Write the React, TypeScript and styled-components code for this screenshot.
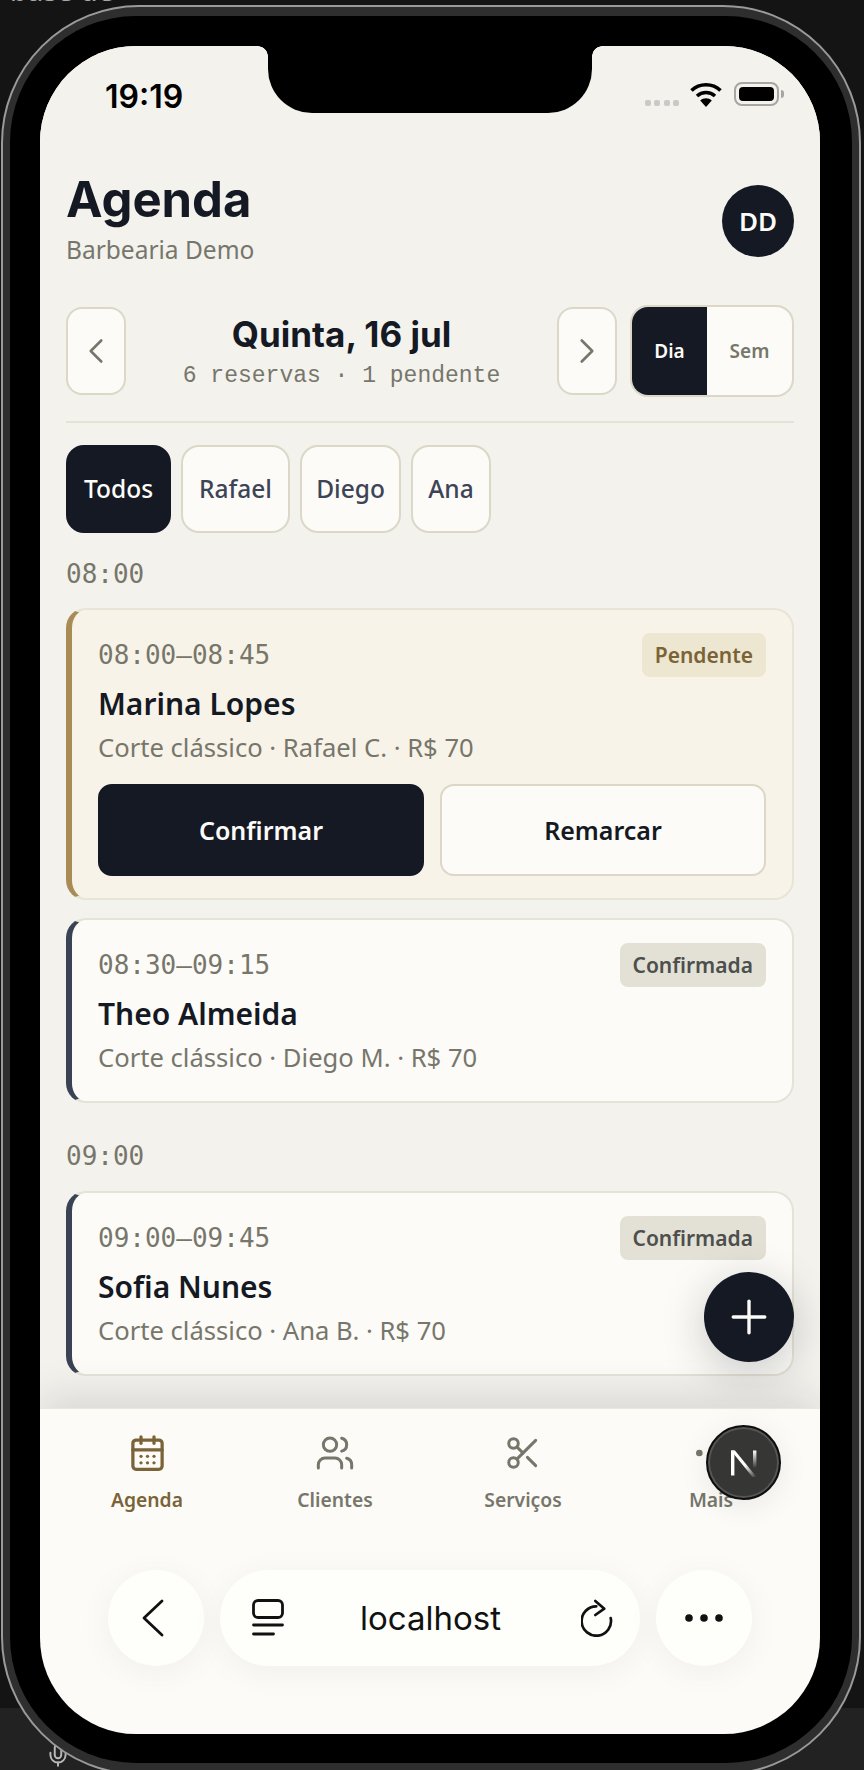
import styled, { createGlobalStyle } from "styled-components";
import { CalendarDays, ChevronLeft, ChevronRight, Ellipsis, Mic, Plus, Scissors, Users } from "lucide-react";

const sans = `"Noto Sans", Roboto, sans-serif`;
const display = `Inter, "Noto Sans", sans-serif`;
const mono = `"DejaVu Sans Mono", "Liberation Mono", monospace`;

const GlobalStyle = createGlobalStyle`
    html, body {
        margin: 0;
        padding: 0;
        background: #141414;
    }
    * {
        box-sizing: border-box;
    }
`;

type Booking = { time: string; name: string; detail: string; status: string };

const eight: Booking[] = [
    { time: "08:00–08:45", name: "Marina Lopes", detail: "Corte clássico · Rafael C. · R$ 70", status: "Pendente" },
    { time: "08:30–09:15", name: "Theo Almeida", detail: "Corte clássico · Diego M. · R$ 70", status: "Confirmada" },
];
const nine: Booking[] = [
    { time: "09:00–09:45", name: "Sofia Nunes", detail: "Corte clássico · Ana B. · R$ 70", status: "Confirmada" },
];

const BookingCard = (props: { booking: Booking }): JSX.Element => {
    const pending = props.booking.status === "Pendente";
    return (
        <Card $pending={pending}>
            <CardTop>
                <CardTime>{props.booking.time}</CardTime>
                <Badge $pending={pending}>{props.booking.status}</Badge>
            </CardTop>
            <CardName>{props.booking.name}</CardName>
            <CardDetail>{props.booking.detail}</CardDetail>
            {pending && (
                <Actions>
                    <ActionButton $primary>Confirmar</ActionButton>
                    <ActionButton>Remarcar</ActionButton>
                </Actions>
            )}
        </Card>
    );
};

const App = (): JSX.Element => {
    return (
        <>
            <GlobalStyle />
            <Page>
                <BackText>base de</BackText>
                <BackMic><Mic size={26} strokeWidth={1.8} /></BackMic>
                <Frame>
                    <Bezel>
                        <Screen>
                            <Notch />
                            <StatusBar>
                                <Clock>19:19</Clock>
                                <StatusIcons>
                                    <Signal><i /><i /><i /><i /></Signal>
                                    <svg width="32" height="25" viewBox="0 0 32 25" fill="none" stroke="#000" strokeWidth="3.6">
                                        <path d="M1.5 8.5C9.5 .8 22.5 .8 30.5 8.5" />
                                        <path d="M7 14C12 9.4 20 9.4 25 14" />
                                        <path d="M16 25l-5.8-6.4C13.5 15.6 18.5 15.6 21.8 18.6Z" fill="#000" stroke="none" />
                                    </svg>
                                    <Battery><b /></Battery>
                                </StatusIcons>
                            </StatusBar>

                            <Content>
                                <Header>
                                    <div>
                                        <Title>Agenda</Title>
                                        <Subtitle>Barbearia Demo</Subtitle>
                                    </div>
                                    <Avatar>DD</Avatar>
                                </Header>

                                <DateRow>
                                    <NavButton><ChevronLeft size={42} strokeWidth={1.5} /></NavButton>
                                    <DateInfo>
                                        <DateTitle>Quinta, 16 jul</DateTitle>
                                        <DateSub>6 reservas · 1 pendente</DateSub>
                                    </DateInfo>
                                    <NavButton><ChevronRight size={42} strokeWidth={1.5} /></NavButton>
                                    <Toggle>
                                        <ToggleItem $active>Dia</ToggleItem>
                                        <ToggleItem>Sem</ToggleItem>
                                    </Toggle>
                                </DateRow>

                                <Chips>
                                    <Chip $active>Todos</Chip>
                                    <Chip>Rafael</Chip>
                                    <Chip>Diego</Chip>
                                    <Chip>Ana</Chip>
                                </Chips>

                                <HourLabel>08:00</HourLabel>
                                <CardList>
                                    {eight.map((b) => <BookingCard key={b.time} booking={b} />)}
                                </CardList>

                                <HourLabel $later>09:00</HourLabel>
                                <CardList>
                                    {nine.map((b) => <BookingCard key={b.time} booking={b} />)}
                                </CardList>
                            </Content>

                            <Fab><Plus size={54} strokeWidth={1.5} /></Fab>

                            <TabBar>
                                <Tab $active>
                                    <CalendarDays size={39} strokeWidth={2} />
                                    <span>Agenda</span>
                                </Tab>
                                <Tab>
                                    <Users size={40} strokeWidth={1.8} />
                                    <span>Clientes</span>
                                </Tab>
                                <Tab>
                                    <Scissors size={38} strokeWidth={1.9} />
                                    <span>Serviços</span>
                                </Tab>
                                <Tab>
                                    <Ellipsis size={40} strokeWidth={2} />
                                    <span>Mais</span>
                                </Tab>
                            </TabBar>

                            <DevBadge>
                                <svg width="34" height="34" viewBox="0 0 34 34" fill="none">
                                    <defs>
                                        <linearGradient id="nDiag" x1="0" y1="0" x2="1" y2="1">
                                            <stop offset="0.55" stopColor="#fff" />
                                            <stop offset="1" stopColor="#fff" stopOpacity="0" />
                                        </linearGradient>
                                        <linearGradient id="nRight" x1="0" y1="0" x2="0" y2="1">
                                            <stop offset="0" stopColor="#fff" />
                                            <stop offset="0.8" stopColor="#fff" stopOpacity="0" />
                                        </linearGradient>
                                    </defs>
                                    <rect x="4" y="4.5" width="3.4" height="25" fill="#fff" />
                                    <path d="M4 4.5h4L29.5 31h-4Z" fill="url(#nDiag)" />
                                    <rect x="26" y="4.5" width="3.4" height="22" fill="url(#nRight)" />
                                </svg>
                            </DevBadge>

                            <BrowserBar>
                                <RoundButton>
                                    <svg width="30" height="38" viewBox="0 0 30 38" fill="none" stroke="#111" strokeWidth="2.8" strokeLinecap="round" strokeLinejoin="round">
                                        <path d="M21 2L3 19l18 17" />
                                    </svg>
                                </RoundButton>
                                <AddressPill>
                                    <svg width="32" height="38" viewBox="0 0 32 38" fill="none" stroke="#111" strokeWidth="2.8" strokeLinecap="round">
                                        <rect x="1.5" y="1.5" width="29" height="17" rx="4.5" />
                                        <path d="M1.5 26h29M1.5 35h20" />
                                    </svg>
                                    <Address>localhost</Address>
                                    <svg width="32" height="38" viewBox="0 0 32 38" fill="none" stroke="#111" strokeWidth="2.7" strokeLinecap="round" strokeLinejoin="round">
                                        <path d="M15.3 7.3A14.7 14.7 0 1 0 29.7 19" />
                                        <path d="M14.3 2l9 7.7-9 6.3" />
                                    </svg>
                                </AddressPill>
                                <RoundButton>
                                    <svg width="38" height="10" viewBox="0 0 38 10" fill="#111">
                                        <circle cx="4" cy="5" r="3.8" />
                                        <circle cx="19" cy="5" r="3.8" />
                                        <circle cx="34" cy="5" r="3.8" />
                                    </svg>
                                </RoundButton>
                            </BrowserBar>
                        </Screen>
                    </Bezel>
                </Frame>
            </Page>
        </>
    );
};

const Page = styled.div`
    position: relative;
    width: 864px;
    height: 1770px;
    padding: 5px 0 0 1px;
    overflow: hidden;
    background: linear-gradient(#141414 0, #141414 1708px, #222222 1708px);
`;

const BackText = styled.div`
    position: absolute;
    left: 10px;
    top: -29px;
    font: 500 28px ${sans};
    color: #a8a8a8;
`;

const BackMic = styled.div`
    position: absolute;
    left: 45px;
    top: 1742px;
    color: #b8b8b8;
`;

const Frame = styled.div`
    position: relative;
    width: 860px;
    height: 1770px;
    padding: 9px 7px;
    border-radius: 138px;
    background: #2e2e2e;
    border: 2px solid #9a9a9a;
`;

const Bezel = styled.div`
    width: 100%;
    height: 1747px;
    padding: 30px 32px 29px 30px;
    background: #000;
    border-radius: 126px;
`;

const Screen = styled.div`
    position: relative;
    display: flex;
    flex-direction: column;
    width: 780px;
    height: 1688px;
    overflow: hidden;
    border-radius: 96px;
    background: #fcfbf7;
`;

const Notch = styled.div`
    position: absolute;
    left: 228px;
    top: 0;
    width: 324px;
    height: 67px;
    background: #000;
    border-radius: 0 0 44px 44px;
    z-index: 4;
    &::before,
    &::after {
        content: "";
        position: absolute;
        top: 0;
        width: 10px;
        height: 10px;
    }
    &::before {
        left: -10px;
        background: radial-gradient(circle at 0 100%, transparent 9.5px, #000 10px);
    }
    &::after {
        right: -10px;
        background: radial-gradient(circle at 100% 100%, transparent 9.5px, #000 10px);
    }
`;

const StatusBar = styled.div`
    display: flex;
    justify-content: space-between;
    align-items: flex-start;
    height: 123px;
    padding: 31px 41px 0 65px;
    background: #f3f2ed;
`;

const Clock = styled.div`
    font: 600 32px Inter, sans-serif;
    color: #000;
`;

const StatusIcons = styled.div`
    display: flex;
    align-items: flex-start;
    gap: 11px;
    padding-top: 5px;
`;

const Signal = styled.div`
    display: flex;
    gap: 3.5px;
    margin-top: 18px;
    i {
        width: 6px;
        height: 6px;
        border-radius: 2px;
        background: #c9c9c6;
    }
`;

const Battery = styled.div`
    position: relative;
    width: 45px;
    height: 24px;
    margin-left: 1px;
    padding: 3px;
    border: 2px solid #a6a6a3;
    border-radius: 8px;
    b {
        display: block;
        height: 100%;
        border-radius: 4px;
        background: #000;
    }
    &::after {
        content: "";
        position: absolute;
        right: -7px;
        top: 6px;
        width: 3px;
        height: 8px;
        border-radius: 0 3px 3px 0;
        background: #a6a6a3;
    }
`;

const Content = styled.div`
    flex: 1;
    min-height: 0;
    overflow: hidden;
    padding: 0 26px;
    background: #f3f2ed;
`;

const Header = styled.div`
    display: flex;
    justify-content: space-between;
    align-items: center;
    padding-bottom: 38px;
`;

const Title = styled.div`
    font: 700 49px/62px ${display};
    color: #141923;
`;

const Subtitle = styled.div`
    margin-top: 2px;
    font: 400 24.5px/34px ${sans};
    color: #77766b;
`;

const Avatar = styled.div`
    display: flex;
    align-items: center;
    justify-content: center;
    width: 72px;
    height: 72px;
    margin-top: 6px;
    border-radius: 50%;
    background: #141923;
    color: #fcfbf7;
    font: 600 26px ${sans};
`;

const DateRow = styled.div`
    display: flex;
    align-items: center;
    padding-bottom: 24px;
    border-bottom: 2px solid #e5e2d6;
`;

const NavButton = styled.div`
    display: flex;
    align-items: center;
    justify-content: center;
    width: 60px;
    height: 88px;
    flex: none;
    border: 2px solid #dcd7c7;
    border-radius: 16px;
    background: #fcfbf7;
    color: #77766b;
`;

const DateInfo = styled.div`
    flex: 1;
    text-align: center;
`;

const DateTitle = styled.div`
    font: 700 35px/44px ${display};
    color: #141923;
`;

const DateSub = styled.div`
    margin-top: 5px;
    font: 400 23px/30px "Liberation Mono", monospace;
    color: #77766b;
`;

const Toggle = styled.div`
    display: flex;
    width: 164px;
    height: 92px;
    margin-left: 13px;
    flex: none;
    overflow: hidden;
    border: 2px solid #dcd7c7;
    border-radius: 18px;
    background: #fcfbf7;
`;

const ToggleItem = styled.div<{ $active?: boolean }>`
    display: flex;
    align-items: center;
    justify-content: center;
    flex: ${(props) => (props.$active ? "0 0 75px" : "1")};
    font: 600 19px ${sans};
    color: ${(props) => (props.$active ? "#fcfbf7" : "#77766b")};
    background: ${(props) => (props.$active ? "#141923" : "transparent")};
`;

const Chips = styled.div`
    display: grid;
    grid-template-columns: 105px 109px 101px 80px;
    gap: 10px;
    padding-top: 22px;
`;

const Chip = styled.div<{ $active?: boolean }>`
    display: flex;
    align-items: center;
    justify-content: center;
    height: 88px;
    padding-bottom: 2px;
    border: 2px solid ${(props) => (props.$active ? "#141923" : "#dcd7c7")};
    border-radius: 18px;
    background: ${(props) => (props.$active ? "#141923" : "#fcfbf7")};
    color: ${(props) => (props.$active ? "#fcfbf7" : "#3c4456")};
    font: 500 24.5px ${sans};
`;

const HourLabel = styled.div<{ $later?: boolean }>`
    padding: ${(props) => (props.$later ? "36px 0 18px" : "24px 0 17px")};
    font: 400 26px/34px ${mono};
    color: #77766b;
`;

const CardList = styled.div`
    display: flex;
    flex-direction: column;
    gap: 18px;
`;

const Card = styled.div<{ $pending: boolean }>`
    padding: 23px 26px ${(props) => (props.$pending ? "22px" : "26px")};
    border: 2px solid ${(props) => (props.$pending ? "#e8e4d6" : "#e5e2d6")};
    border-left: 6px solid ${(props) => (props.$pending ? "#a98c55" : "#3a4355")};
    border-radius: 20px;
    background: ${(props) => (props.$pending ? "#f7f3e8" : "#fcfbf7")};
`;

const CardTop = styled.div`
    display: flex;
    justify-content: space-between;
    align-items: center;
`;

const CardTime = styled.div`
    font: 400 26px ${mono};
    color: #77766b;
`;

const Badge = styled.div<{ $pending: boolean }>`
    display: flex;
    align-items: center;
    height: 44px;
    padding: 0 13px;
    border-radius: 8px;
    background: ${(props) => (props.$pending ? "#ede6d0" : "#e3e1d6")};
    color: ${(props) => (props.$pending ? "#7a6337" : "#4d4f4d")};
    font: 600 21px ${sans};
`;

const CardName = styled.div`
    margin-top: 5px;
    font: 600 30px/44px ${sans};
    color: #141923;
`;

const CardDetail = styled.div`
    margin-top: 5px;
    font: 400 25.6px/34px ${sans};
    color: #77766b;
`;

const Actions = styled.div`
    display: flex;
    gap: 16px;
    margin-top: 19px;
`;

const ActionButton = styled.div<{ $primary?: boolean }>`
    display: flex;
    align-items: center;
    justify-content: center;
    flex: 1;
    height: 92px;
    border: 2px solid ${(props) => (props.$primary ? "#141923" : "#dcd7c7")};
    border-radius: 14px;
    background: ${(props) => (props.$primary ? "#141923" : "#fcfbf7")};
    color: ${(props) => (props.$primary ? "#fcfbf7" : "#141923")};
    font: 600 25px ${sans};
`;

const Fab = styled.div`
    position: absolute;
    right: 26px;
    top: 1226px;
    display: flex;
    align-items: center;
    justify-content: center;
    width: 90px;
    height: 90px;
    border-radius: 50%;
    background: #141923;
    color: #fcfbf7;
    box-shadow: 0 10px 44px rgba(20, 25, 35, 0.22);
    z-index: 3;
`;

const TabBar = styled.div`
    position: relative;
    display: grid;
    grid-template-columns: repeat(4, 188px);
    padding: 24px 14px 0 13px;
    height: 128px;
    flex: none;
    background: #fcfbf7;
    border-top: 1px solid #e9e6da;
    box-shadow: 0 -10px 40px rgba(20, 25, 35, 0.13);
    clip-path: inset(-70px 0 0 0);
`;

const Tab = styled.div<{ $active?: boolean }>`
    display: flex;
    flex-direction: column;
    align-items: center;
    color: ${(props) => (props.$active ? "#7a6337" : "#77766b")};
    svg {
        height: 40px;
        flex: none;
    }
    span {
        margin-top: 13px;
        font: 600 19.3px ${sans};
    }
`;

const DevBadge = styled.div`
    position: absolute;
    left: 666px;
    top: 1379px;
    display: flex;
    align-items: center;
    justify-content: center;
    width: 75px;
    height: 75px;
    border-radius: 50%;
    background: #363634;
    border: 2px solid #0e0e0e;
    box-shadow: inset 0 0 0 2px #555, 0 6px 30px rgba(0, 0, 0, 0.08);
    z-index: 3;
`;

const BrowserBar = styled.div`
    display: flex;
    justify-content: center;
    gap: 16px;
    height: 198px;
    flex: none;
    padding-top: 34px;
`;

const RoundButton = styled.div`
    display: flex;
    align-items: center;
    justify-content: center;
    width: 96px;
    height: 96px;
    border-radius: 50%;
    background: #fefefb;
    box-shadow: 0 6px 34px rgba(0, 0, 0, 0.05);
`;

const AddressPill = styled.div`
    display: flex;
    align-items: center;
    justify-content: space-between;
    width: 420px;
    height: 96px;
    padding: 0 27px 0 32px;
    border-radius: 48px;
    background: #fefefb;
    box-shadow: 0 6px 34px rgba(0, 0, 0, 0.05);
`;

const Address = styled.div`
    margin-right: 4px;
    font: 400 33px Inter, sans-serif;
    color: #111;
`;

export default App;
